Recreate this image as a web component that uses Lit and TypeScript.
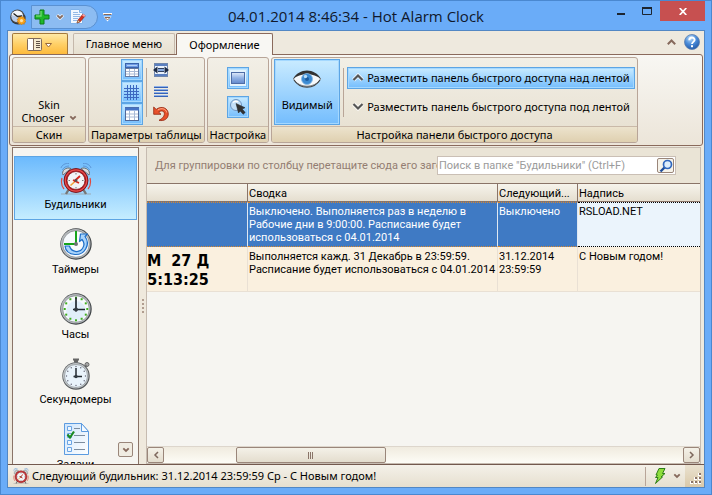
import { LitElement, html, css, svg } from "lit";
import { customElement, property, state } from "lit/decorators.js";
import { classMap } from "lit/directives/class-map.js";

const chevron = (halo = "none") => html`
  <svg width="8" height="6" viewBox="0 0 8 6">
    <path d="M1 1l3 3 3-3" fill="none" stroke="${halo}" stroke-width="3.500" opacity=".7" />
    <path d="M1.300 1.300L4 4l2.700-2.700" fill="none" stroke="#86695c" stroke-width="1.800" />
  </svg>`;

const appIcon = html`
  <svg width="16" height="16" viewBox="0 0 16 16">
    <ellipse cx="8" cy="9" rx="7.6" ry="6.4" fill="#30363c" />
    <circle cx="7.5" cy="7.5" r="7" fill="#4a4a4a" />
    <circle cx="7.2" cy="7.3" r="5.9" fill="#b8cbe8" />
    <path d="M1.5 6a6 6 0 0 1 11.3-.6L8 8z" fill="#f2f6fb" />
    <path d="M3.500 4.5l4 3 4.500-.5" fill="none" stroke="#222" stroke-width="1.4" />
    <path d="M11.5 7l1 1.3 1.6-.4.1 1.7 1.6.6-.8 1.4 1 1.3-1.6.6-.1 1.7-1.6-.4-1.2 1.2-1.2-1.2-1.7.4v-1.7l-1.5-.6.8-1.3-.8-1.4 1.5-.6.1-1.7 1.6.4z" fill="#f7a21c" stroke="#b86c08" stroke-width=".5" />
    <circle cx="11.5" cy="11.6" r="1.6" fill="#fde2a6" />
  </svg>`;

const plusIcon = html`
  <svg width="16" height="16" viewBox="0 0 16 16">
    <path d="M6 1h4v5h5v4h-5v5H6v-5H1V6h5z" fill="#1eb82b" stroke="#0d7a1b" stroke-linejoin="round" />
    <path d="M7 2v5H2" fill="none" stroke="#7fe07f" stroke-width="1.400" opacity=".8" />
  </svg>`;

const editIcon = html`
  <svg width="16" height="16" viewBox="0 0 16 16">
    <path d="M.5.5h9l3 3v11H.5z" fill="#f2f8ff" stroke="#7fb2ea" />
    <path d="M9.500.5v3h3" fill="#cfe4fb" stroke="#7fb2ea" />
    <path d="M3 3.500h5M3 5.500h7M3 7.500h7M3 9.500h5M3 11.500h4" stroke="#94b9e6" />
    <path d="M7 14l1-3 5-6 2.200 1.800-5 6z" fill="#d8301e" stroke="#7c1a12" stroke-width=".6" />
    <path d="M7 14l1-3 2 1.600z" fill="#f6d9a8" stroke="#5a3b28" stroke-width=".4" />
    <path d="M12 6.200l1.200-1.500 2.200 1.700-1.200 1.500z" fill="#f3a2a0" />
  </svg>`;

const qatMenuIcon = html`
  <svg width="9" height="9" viewBox="0 0 9 9">
    <path d="M0 1h9" stroke="#fff" stroke-width="2" />
    <path d="M.5 1.500h8" stroke="#86695c" />
    <path d="M.5 3.500h8L4.500 8.500z" fill="#fff" />
    <path d="M2 4.500h5L4.500 7z" fill="#fff" stroke="#86695c" />
  </svg>`;

const appMenuIcon = html`
  <svg width="26" height="13" viewBox="0 0 26 13">
    <rect x=".5" y=".5" width="14" height="12" rx="1" fill="#f5ead0" stroke="#806a5a" />
    <rect x="1" y="1" width="5" height="11" fill="#fff" />
    <path d="M6.500 1v11" stroke="#806a5a" />
    <path d="M9 3.500h4M9 5.500h4M9 7.500h4M9 9.500h4" stroke="#5f5148" />
    <path d="M18.500 5.500h6l-3 3.500z" fill="#fff" stroke="#9a6a3a" />
  </svg>`;

const helpIcon = html`
  <svg width="16" height="16" viewBox="0 0 16 16">
    <defs><radialGradient id="h" cx=".4" cy=".25" r=".8"><stop offset="0" stop-color="#b9dcfb" /><stop offset=".5" stop-color="#4a8bd8" /><stop offset="1" stop-color="#1e55a5" /></radialGradient></defs>
    <circle cx="8" cy="8" r="7.500" fill="url(#h)" stroke="#5c7fae" stroke-width=".8" />
    <path d="M5.300 6.200c0-3.600 5.500-3.400 5.300-.2C10.500 7.800 8 8 8 10" fill="none" stroke="#fff" stroke-width="1.900" />
    <rect x="7" y="11.200" width="2" height="2" fill="#fff" />
  </svg>`;

const tableTopIcon = html`
  <svg width="14" height="14" viewBox="0 0 14 14">
    <rect x=".5" y=".5" width="13" height="4" fill="#6d9ae4" stroke="#3a63ac" />
    <rect x="2" y="2" width="10" height="1" fill="#b3d0f7" />
    <rect x=".5" y="5.500" width="13" height="8" fill="#fff" stroke="#6478a0" />
    <path d="M1 8.500h12M1 11h12M4.500 6v7M9.500 6v7" stroke="#a9bad6" />
  </svg>`;

const gridIcon = html`
  <svg width="15" height="15" viewBox="0 0 15 15">
    <path d="M0 3.500h15M0 6.500h15M0 9.500h15M0 12.500h15M3.500 0v15M6.500 0v15M9.500 0v15M12.500 0v15" stroke="#3c68c0" />
  </svg>`;

const tableIcon = html`
  <svg width="14" height="14" viewBox="0 0 14 14">
    <rect x=".5" y=".5" width="13" height="13" fill="#fff" stroke="#4f6798" />
    <path d="M0 2h14" stroke="#4674c6" stroke-width="3" />
    <path d="M1 7h12M1 10h12M4.500 4v9M9.500 4v9" stroke="#a9bad6" />
  </svg>`;

const fitIcon = html`
  <svg width="16" height="14" viewBox="0 0 16 14">
    <rect x="1.500" y=".5" width="13" height="13" fill="#e9f1fb" stroke="#7187ab" />
    <path d="M2 2h12M2 12h12" stroke="#5a7fc0" stroke-width="2" />
    <path d="M5 5.500h6M5 8.500h6" stroke="#31425f" />
    <path d="M5 7h6" stroke="#86a8de" stroke-width="2" />
    <path d="M0 7l4.500-3.500v7zM16 7l-4.500-3.500v7z" fill="#1c2a44" />
  </svg>`;

const linesIcon = html`
  <svg width="14" height="12" viewBox="0 0 14 12">
    <path d="M0 1h14M0 4h14M0 7h14M0 10h14" stroke="#8db0e8" stroke-width="2" />
    <path d="M0 1.500h14M0 4.500h14M0 7.500h14M0 10.500h14" stroke="#3762b4" />
  </svg>`;

const undoIcon = html`
  <svg width="16" height="16" viewBox="0 0 16 16">
    <path d="M.7 1v7.300H8L5.700 6c3-2.300 6.300-.8 5.600 2.700-.4 2-2 4-5.300 5.600 5 1.200 9.300-1.500 9.300-6.300C15.300 2 8.500-.7 3.200 3.400z" fill="#e8502a" stroke="#93240e" stroke-width=".8" stroke-linejoin="round" />
    <path d="M4.800 4c4-2.600 8.300-1 9 2.500" fill="none" stroke="#ffb391" />
  </svg>`;

const panelIcon = html`
  <svg width="18" height="18" viewBox="0 0 18 18">
    <defs><linearGradient id="p" x2="0" y2="1"><stop offset="0" stop-color="#e3ecfa" /><stop offset=".5" stop-color="#92b2e4" /><stop offset="1" stop-color="#6288cc" /></linearGradient></defs>
    <rect x="1" y="1" width="16" height="16" fill="#e4f3fd" />
    <rect x="2.500" y="3.500" width="13" height="11" fill="url(#p)" stroke="#4f6da6" />
  </svg>`;

const pointerIcon = html`
  <svg width="16" height="16" viewBox="0 0 16 16">
    <circle cx="6" cy="6" r="5.500" fill="#c4e0f8" stroke="#6f94c0" />
    <path d="M3 3.500a4 4 0 0 1 5-.6" fill="none" stroke="#fff" stroke-width="1.400" />
    <path d="M6 4.500l9 4.200-2.800 1.400 3 3.300-2 1.900-3-3.300L8.500 14z" fill="#333" stroke="#222" stroke-width=".5" stroke-linejoin="round" />
  </svg>`;

const eyeIcon = html`
  <svg width="32" height="32" viewBox="0 0 32 32">
    <path d="M2.500 16C8 6.500 24 6.500 29.500 16 24 25.500 8 25.500 2.500 16z" fill="#f7fafc" stroke="#8b8b8b" />
    <path d="M2 16C8 4.500 24 4.500 30 16 23 9.500 9 9.500 2 16z" fill="#333" />
    <path d="M3 17C9 26.500 23 26.500 29 17" fill="none" stroke="#444" stroke-width="1.200" />
    <circle cx="16" cy="16" r="5.500" fill="#3b8ad2" stroke="#85b9e6" stroke-width=".8" />
    <circle cx="16" cy="16" r="2" fill="#1d5b9e" />
    <circle cx="14.500" cy="13.500" r="1.700" fill="#b9def8" />
  </svg>`;

const arrow = (up: boolean) => html`
  <svg width="12" height="9" viewBox="0 0 12 9">
    <path d="${up ? "M1.500 7L6 2.500 10.500 7" : "M1.500 2L6 6.500 10.500 2"}" fill="none" stroke="#fff" stroke-width="4" opacity=".7" />
    <path d="${up ? "M1.500 7L6 2.500 10.500 7" : "M1.500 2L6 6.500 10.500 2"}" fill="none" stroke="#555" stroke-width="2.200" />
  </svg>`;

const alarmIcon = (size: number) => html`
  <svg width="${size}" height="${size}" viewBox="0 0 32 32">
    <path d="M1 31h30" stroke="#999" opacity=".7" />
    <path d="M9 26l-3 5M23 26l3 5" stroke="#777" stroke-width="2.400" />
    <path d="M1 5c1-3 4-5 8-4.500M2.500 7C3.500 4.500 6 3 9 3M31 5c-1-3-4-5-8-4.500M29.500 7c-1-2.500-3.500-4-6.500-4" fill="none" stroke="#5c97d8" />
    <path d="M2 15c-1 4-.5 8 2 11M30 15c1 4 .5 8-2 11" fill="none" stroke="#e0493e" stroke-width="1.200" />
    <path d="M3 12c-2-4 3-8.500 8-6.500zM29 12c2-4-3-8.500-8-6.500z" fill="#d9dbdd" stroke="#6d7073" />
    <circle cx="16" cy="17.500" r="12" fill="#a81118" stroke="#6c0a0e" stroke-width=".8" />
    <circle cx="16" cy="17.500" r="10.700" fill="none" stroke="#e4514f" stroke-width="1.200" />
    <circle cx="16" cy="17.500" r="9" fill="#f2f5f7" stroke="#8d2024" stroke-width=".8" />
    <path d="M16 10v1.500M16 24v1.500M8.500 17.500H10M22 17.500h1.500" stroke="#777" />
    <path d="M16 17.500l-5.500 5" stroke="#f0a13a" stroke-width="1.600" />
    <path d="M14 18.500l6-5.500M13 17l6 3" stroke="#d5261b" stroke-width="1.800" />
    <circle cx="16" cy="17.500" r="1.400" fill="#555" />
  </svg>`;

const face = svg`
  <circle cx="16" cy="16" r="15.700" fill="#3f4346" />
  <circle cx="15.700" cy="15.700" r="14.800" fill="#b4b8bb" />
  <circle cx="16" cy="16" r="13.300" fill="#f6fafd" stroke="#6c7073" stroke-width=".6" />`;

const timerIcon = html`
  <svg width="32" height="32" viewBox="0 0 32 32">
    ${face}
    <path d="M5 18h4.500c1.500 6 9.500 7.500 13 2.500 2-3 1.700-6.500-.5-9L19.500 13.500l1-7.500h7L25 8.500c6 8-.5 18.500-10 18C9.500 26 5.500 23 5 18z" fill="#a9d4fb" stroke="#1d6ec8" stroke-width="1.200" stroke-linejoin="round" />
    <path d="M16 3v13M15 16H4" fill="none" stroke="#16a51c" stroke-width="2" />
    <circle cx="16" cy="16" r="2" fill="#6d7275" />
  </svg>`;

const clockDots = Array.from({ length: 12 }, (_, i) => {
  const a = (i * Math.PI) / 6;
  return [16 + 11.3 * Math.sin(a), 16 - 11.3 * Math.cos(a)];
});

const clockIcon = html`
  <svg width="32" height="32" viewBox="0 0 32 32">
    ${face}
    <circle cx="16" cy="18" r="10" fill="#dcecf9" opacity=".8" />
    ${clockDots.map(([x, y]) => svg`<rect x="${x - 1}" y="${y - 1}" width="2" height="2" fill="#3fae1f" />`)}
    <path d="M16 4.500v14M13 16.500h12" stroke="#222a30" stroke-width="1.700" />
    <circle cx="16" cy="16.500" r="2" fill="#333b42" />
  </svg>`;

const stopwatchIcon = html`
  <svg width="32" height="32" viewBox="0 0 32 32">
    <path d="M13 1.500h6M14 3.500h4" stroke="#666" stroke-width="1.800" />
    <circle cx="27" cy="6.500" r="2" fill="#aaa" stroke="#666" />
    <path d="M24.500 9l2-2" stroke="#777" stroke-width="1.500" />
    <circle cx="16" cy="18" r="13.700" fill="#54585b" />
    <circle cx="15.800" cy="17.800" r="12.800" fill="#c0c4c7" />
    <circle cx="16" cy="18" r="11.500" fill="#e9f3fb" stroke="#7b8083" stroke-width=".6" />
    ${clockDots.map(([x, y]) => svg`<circle cx="${16 + (x - 16) * 0.84}" cy="${18 + (y - 16) * 0.84}" r=".7" fill="#667" />`)}
    <path d="M16 10v10M13.500 18.500H22" stroke="#222a30" stroke-width="1.500" />
    <circle cx="16" cy="18.500" r="1.700" fill="#333b42" />
  </svg>`;

const tasksIcon = html`
  <svg width="32" height="32" viewBox="0 0 32 32">
    <defs><linearGradient id="t" x2="1" y2="1"><stop offset="0" stop-color="#cfe5fb" /><stop offset="1" stop-color="#fff" /></linearGradient></defs>
    <path d="M4.500.5h17l7 8v23h-24z" fill="url(#t)" stroke="#5c9be0" />
    <path d="M21.500.5v8h7z" fill="#f4faff" stroke="#5c9be0" />
    <path d="M7.500 3.500h4v4h-4zM7.500 10.500h4v4h-4zM7.500 17.500h4v4h-4zM7.500 24.500h4v4h-4z" fill="#eef6fe" stroke="#6ba5e4" />
    <path d="M14 5.500h6M14 12.500h11M14 19.500h11M14 26.500h11" stroke="#7d8d9e" />
    <path d="M7.500 11.500l2.500 3 4-6" fill="none" stroke="#1b8a22" stroke-width="2.200" />
  </svg>`;

const searchIcon = html`
  <svg width="14" height="14" viewBox="0 0 14 14">
    <path d="M5.500 8.500L1.500 12.500" stroke="#1e4c9a" stroke-width="2.400" />
    <circle cx="8.500" cy="5.500" r="4" fill="#dcecfb" stroke="#2f66bd" stroke-width="1.700" />
  </svg>`;

const boltIcon = html`
  <svg width="12" height="16" viewBox="0 0 12 16">
    <path d="M5 .5h6L8.500 5.500h2.500L7 9h1.500l-7 6.500L4 9.500H1.500L3.500 7H2z" fill="#8ede3c" stroke="#2f7d18" stroke-linejoin="round" />
  </svg>`;

const gripIcon = html`
  <svg width="12" height="12" viewBox="0 0 12 12">
    ${[[9, 1], [5, 5], [9, 5], [1, 9], [5, 9], [9, 9]].map(([x, y]) => svg`
      <rect x="${x - 1}" y="${y}" width="3" height="3" fill="#fff" /><rect x="${x}" y="${y}" width="2" height="2" fill="#8a7468" />`)}
  </svg>`;

const reset = css`
  * { box-sizing: border-box; }
  svg { display: block; flex: none; }
  button { font: inherit; color: inherit; padding: 0; margin: 0; border: 0; background: none; }
`;

@customElement("ribbon-group")
export class RibbonGroup extends LitElement {
  @property() caption = "";

  static styles = [reset, css`
    :host {
      display: flex; flex-direction: column; flex: none; height: 86px;
      border: 1px solid #b8a598; border-radius: 3px; overflow: hidden;
      background: linear-gradient(#f2efe6, #e6dfcf);
    }
    .content { flex: 1; display: flex; align-items: center; justify-content: center; gap: 3px; padding: 0 2px; }
    .caption {
      height: 16px; line-height: 15px; padding: 0 2px; border-top: 1px solid #c9b9a8; text-align: center; white-space: nowrap;
      background: linear-gradient(#ece3cd, #dfd0b0);
    }
  `];

  render() {
    return html`<div class="content"><slot></slot></div><div class="caption">${this.caption}</div>`;
  }
}

@customElement("app-root")
export class AppRoot extends LitElement {
  @state() private section = 0;

  private sections = [
    { label: "Будильники", icon: alarmIcon(32) },
    { label: "Таймеры", icon: timerIcon },
    { label: "Часы", icon: clockIcon },
    { label: "Секундомеры", icon: stopwatchIcon },
    { label: "Задачи", icon: tasksIcon },
  ];

  static styles = [reset, css`
    :host {
      display: flex; flex-direction: column; height: 100vh; box-sizing: border-box;
      border: 1px solid #4a88d0; padding: 0 6px 6px; background: #6aacf8; color: #000;
      font: 11px/16px "Noto Sans", "Open Sans", sans-serif;
    }

    .titlebar { display: grid; grid-template-columns: 1fr auto 1fr; height: 29px; flex: none; }
    .quick { display: flex; align-items: center; gap: 5px; padding: 1px 0 0 3px; }
    .quickbox {
      display: flex; align-items: center; gap: 6px; height: 24px; padding: 0 11px 0 2px;
      border: 1px solid #5a91d2; border-radius: 0 12px 12px 0; background: #8cbcf2;
    }
    .title { margin: 0; font: 15px/31px "Open Sans", "Noto Sans", sans-serif; white-space: nowrap; color: #10182c; }
    .winbuttons { display: flex; justify-content: flex-end; align-items: flex-start; }
    .winbuttons button { height: 20px; width: 26px; display: grid; place-items: center; }
    .winbuttons .close { width: 45px; background: #c75050; }

    .client {
      flex: 1; min-height: 0; display: flex; flex-direction: column;
      border: 1px solid #5287c4; background: #eee9de;
    }

    .tabs { display: flex; align-items: flex-end; height: 23px; flex: none; padding-left: 4px; }
    .appmenu {
      width: 56px; height: 21px; display: grid; place-items: center;
      border: 1px solid #a5793c; border-bottom: 0; border-radius: 2px 2px 0 0;
      background: linear-gradient(#ffe9a6, #ffd067 50%, #fdba3c);
    }
    .tab {
      height: 21px; width: 102px; margin-left: 5px; border: 1px solid #c5b8ab; border-bottom: 0; border-radius: 2px 2px 0 0;
      background: linear-gradient(#f0ece2, #e7e0d0);
    }
    .tab.active {
      width: 97px; height: 22px; margin: 0 0 -1px 1px; background: #f8f7f3; border-color: #8a6a5c; position: relative;
    }
    .tools { margin-left: auto; align-self: flex-start; display: flex; align-items: center; gap: 8px; padding-right: 4px; height: 22px; }

    .ribbon {
      flex: none; display: flex; gap: 2px; height: 92px; padding: 2px; margin: 0 1px;
      border: 1px solid #8a6a5c; border-radius: 3px; background: linear-gradient(#f8f7f3, #ece5d9);
    }
    .toggles { display: flex; flex-direction: column; }
    .toggles.spaced { gap: 7px; }
    .toggle { width: 22px; height: 22px; display: grid; place-items: center; }
    .on { border: 1px solid #5da5e4; background: linear-gradient(#c9ebff, #74bdfd); box-shadow: inset 0 0 0 1px #a4d8ff; }
    .sep { width: 1px; height: 49px; background: #b8a598; }
    .skin { align-self: flex-end; line-height: 13px; padding-bottom: 2px; width: 68px; }
    .skin span { display: flex; align-items: center; justify-content: center; gap: 4px; }
    .big { width: 66px; height: 66px; display: flex; flex-direction: column; align-items: center; gap: 2px; padding-top: 3px; }
    .wide { height: 22px; display: flex; align-items: center; gap: 3px; padding: 0 4px; white-space: nowrap; border: 1px solid transparent; }
    .wide.on { border-color: #5da5e4; }

    .body { flex: 1; min-height: 0; display: flex; padding: 1px 3px 0 4px; }
    .nav {
      width: 127px; flex: none; display: flex; flex-direction: column; gap: 1px; padding: 8px 1px 0; overflow: hidden;
      border: 1px solid #8a7468; border-bottom: 0; background: #f6f5f1; position: relative;
    }
    .nav .item {
      height: 64px; flex: none; display: flex; flex-direction: column; align-items: center; justify-content: center; gap: 2px;
      font: 11px/16px Roboto, "DejaVu Sans Condensed", sans-serif; border: 1px solid transparent;
    }
    .nav .item.selected { border-color: #5da5e4; background: linear-gradient(#6cbafd, #c5edff); }
    .nav .more {
      position: absolute; right: 5px; bottom: 7px; width: 15px; height: 15px; display: grid; place-items: center;
      border: 1px solid #9a867a; border-radius: 2px; background: #f0ece2;
    }
    .splitter {
      width: 8px; flex: none; display: flex; flex-direction: column; align-items: center; justify-content: center; gap: 2px;
      background: #efe9dd; border-right: 1px solid #c6bbb0;
    }
    .splitter i { width: 2px; height: 2px; background: #b09d8f; }

    .view {
      flex: 1; min-width: 0; display: flex; flex-direction: column; border: 1px solid #c6bbb0; border-left: 0;
      background: #f6f5f1; font: 11px/13px Roboto, "DejaVu Sans Condensed", sans-serif;
    }
    .groupbar { display: flex; align-items: center; height: 35px; flex: none; padding: 0 24px 0 8px; background: #eae4d6; color: #937d72; }
    .hint { flex: 1; min-width: 0; overflow: hidden; white-space: nowrap; }
    .search { display: flex; width: 239px; height: 19px; background: #fff; border: 1px solid #cabfb5; }
    .search input { flex: 1; min-width: 0; font: inherit; border: 0; padding: 0 0 0 1px; background: none; outline: 0; }
    .search input::placeholder { color: #9b9b9b; opacity: 1; }
    .search button { width: 17px; height: 15px; margin: 1px; display: grid; place-items: center; border: 1px solid #9a867a; border-radius: 2px; background: #f6f3ea; }

    table { width: 100%; border-collapse: separate; border-spacing: 0; table-layout: fixed; flex: none; }
    .c1 { width: 101px; }
    .c2 { width: 250px; }
    .c3 { width: 80px; }
    th {
      height: 19px; padding: 1px 1px 0; text-align: left; font-weight: normal; overflow: hidden; white-space: nowrap;
      background: linear-gradient(#f6f4ec, #e5decf); border: 1px solid #8a7468; border-width: 1px 1px 1px 0;
    }
    td { height: 45px; padding: 3px 1px 0; vertical-align: top; border-right: 1px solid #e9e0d4; border-bottom: 1px solid #e9e0d4; background: #faf0df; }
    th:last-child, td:last-child { border-right: 0; }
    .sel td { background: #3f7ac4; color: #fff; padding-top: 2px; border-top: 1px dotted #d8862c; border-bottom: 1px dotted #d8862c; border-right-color: #dfe8f2; }
    .sel td.focus { background: #ebf4fc; color: #000; border-top-color: #000; border-bottom-color: #000; }
    td.count {
      padding: 4px 38px 0 0; text-align: center; white-space: pre;
      font: bold 16px/19px "DejaVu Sans Condensed", "DejaVu Sans", sans-serif;
    }

    .scroll { margin-top: auto; height: 17px; display: grid; grid-template-columns: 17px 72fr 150px 297fr 17px; border-top: 1px solid #ddd6cc; background: linear-gradient(#f0ebdf, #fdfcf6); }
    .scroll button { display: grid; place-items: center; border: 1px solid #9a867a; border-radius: 2px; background: linear-gradient(#f4f1e8, #e4ddce); }
    .scroll .thumb { grid-column: 3; }
    .scroll .next { grid-column: 5; }

    .status { flex: none; height: 23px; display: flex; align-items: center; padding-left: 5px; gap: 3px; border-top: 1px solid #73594e; background: linear-gradient(#f4f1e9, #e6dfcf); }
    .status output { flex: 1; }
    .power { display: flex; align-items: center; gap: 7px; height: 19px; padding: 0 1px 0 8px; border-left: 1px solid #b8a598; }
    .grip { width: 19px; height: 22px; display: flex; align-items: flex-end; justify-content: flex-end; padding: 0 2px 3px 0; background: linear-gradient(#eae2d0, #dac9a9); }
  `];

  render() {
    return html`
      <header class="titlebar">
        <div class="quick">
          ${appIcon}
          <div class="quickbox">
            <button aria-label="Добавить">${plusIcon}</button>
            <button aria-label="Список">${chevron("#fff")}</button>
            <button aria-label="Изменить">${editIcon}</button>
          </div>
          <button aria-label="Настроить">${qatMenuIcon}</button>
        </div>
        <h1 class="title">04.01.2014 8:46:34 - Hot Alarm Clock</h1>
        <div class="winbuttons">
          <button aria-label="Свернуть"><svg width="8" height="8" viewBox="0 0 8 8"><path d="M0 7h8" stroke="#1c2530" stroke-width="2" /></svg></button>
          <button aria-label="Развернуть"><svg width="10" height="8" viewBox="0 0 10 8"><path d="M.5 1v6.500h9V1" fill="none" stroke="#1c2530" /><path d="M0 1h10" stroke="#1c2530" stroke-width="2" /></svg></button>
          <button class="close" aria-label="Закрыть"><svg width="8" height="7" viewBox="0 0 8 7"><path d="M.7 0l6.600 7M7.300 0L.7 7" stroke="#fff" stroke-width="1.700" /></svg></button>
        </div>
      </header>

      <div class="client">
        <nav class="tabs">
          <button class="appmenu" aria-label="Меню">${appMenuIcon}</button>
          <button class="tab">Главное меню</button>
          <button class="tab active">Оформление</button>
          <div class="tools">
            <button aria-label="Свернуть ленту"><svg width="9" height="6" viewBox="0 0 9 6"><path d="M.8 5.200l3.700-3.700 3.700 3.700" fill="none" stroke="#86695c" stroke-width="2" /></svg></button>
            <button aria-label="Справка">${helpIcon}</button>
          </div>
        </nav>

        <section class="ribbon">
          <ribbon-group caption="Скин">
            <button class="skin">Skin <span>Chooser ${chevron()}</span></button>
          </ribbon-group>
          <ribbon-group caption="Параметры таблицы">
            <div class="toggles">
              <button class="toggle on" aria-label="Заголовок">${tableTopIcon}</button>
              <button class="toggle on" aria-label="Сетка">${gridIcon}</button>
              <button class="toggle on" aria-label="Таблица">${tableIcon}</button>
            </div>
            <div class="sep"></div>
            <div class="toggles">
              <button class="toggle" aria-label="Ширина">${fitIcon}</button>
              <button class="toggle" aria-label="Строки">${linesIcon}</button>
              <button class="toggle" aria-label="Сброс">${undoIcon}</button>
            </div>
          </ribbon-group>
          <ribbon-group caption="Настройка">
            <div class="toggles spaced">
              <button class="toggle on" aria-label="Панель">${panelIcon}</button>
              <button class="toggle on" aria-label="Указатель">${pointerIcon}</button>
            </div>
          </ribbon-group>
          <ribbon-group caption="Настройка панели быстрого доступа">
            <button class="big on">${eyeIcon}Видимый</button>
            <div class="sep"></div>
            <div class="toggles spaced">
              <button class="wide on">${arrow(true)}Разместить панель быстрого доступа над лентой</button>
              <button class="wide">${arrow(false)}Разместить панель быстрого доступа под лентой</button>
            </div>
          </ribbon-group>
        </section>

        <div class="body">
          <nav class="nav">
            ${this.sections.map((s, i) => html`
              <button class=${classMap({ item: true, selected: i === this.section })} @click=${() => (this.section = i)}>
                ${s.icon}${s.label}
              </button>`)}
            <button class="more" aria-label="Ещё">${chevron()}</button>
          </nav>
          <div class="splitter"><i></i><i></i><i></i><i></i></div>

          <main class="view">
            <div class="groupbar">
              <div class="hint">Для группировки по столбцу перетащите сюда его заголовок</div>
              <div class="search">
                <input type="text" aria-label="Поиск" placeholder='Поиск в папке "Будильники" (Ctrl+F)' />
                <button aria-label="Найти">${searchIcon}</button>
              </div>
            </div>
            <table>
              <colgroup><col class="c1" /><col class="c2" /><col class="c3" /><col /></colgroup>
              <thead><tr><th></th><th>Сводка</th><th>Следующий...</th><th>Надпись</th></tr></thead>
              <tbody>
                <tr class="sel">
                  <td></td>
                  <td>Выключено. Выполняется раз в неделю в Рабочие дни в 9:00:00. Расписание будет использоваться с 04.01.2014</td>
                  <td>Выключено</td>
                  <td class="focus">RSLOAD.NET</td>
                </tr>
                <tr>
                  <td class="count">М  27 Д<br />5:13:25</td>
                  <td>Выполняется кажд. 31 Декабрь в 23:59:59. Расписание будет использоваться с 04.01.2014</td>
                  <td>31.12.2014 23:59:59</td>
                  <td>С Новым годом!</td>
                </tr>
              </tbody>
            </table>
            <div class="scroll">
              <button aria-label="Влево"><svg width="6" height="8" viewBox="0 0 6 8"><path d="M5 1L2 4l3 3" fill="none" stroke="#7d675c" stroke-width="1.500" /></svg></button>
              <button class="thumb" aria-label="Прокрутка"><svg width="6" height="7" viewBox="0 0 6 7"><path d="M.5 0v7M2.500 0v7M4.500 0v7" stroke="#8a7468" /></svg></button>
              <button class="next" aria-label="Вправо"><svg width="6" height="8" viewBox="0 0 6 8"><path d="M1 1l3 3-3 3" fill="none" stroke="#7d675c" stroke-width="1.500" /></svg></button>
            </div>
          </main>
        </div>

        <footer class="status">
          ${alarmIcon(16)}
          <output>Следующий будильник: 31.12.2014 23:59:59 Ср - С Новым годом!</output>
          <button class="power" aria-label="Питание">${boltIcon}${chevron()}</button>
          <div class="grip">${gripIcon}</div>
        </footer>
      </div>
    `;
  }
}
